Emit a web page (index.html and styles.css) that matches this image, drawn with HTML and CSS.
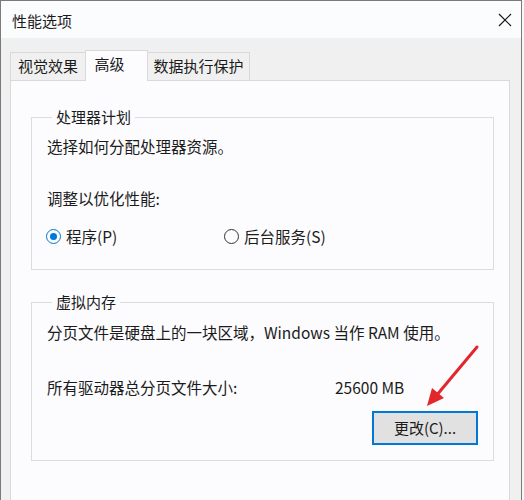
FILE: index.html
```html
<!DOCTYPE html>
<html lang="zh-CN">
<head>
<meta charset="utf-8">
<title>性能选项</title>
<link rel="stylesheet" href="styles.css">
</head>
<body>
<div class="window">
  <div class="titlebar">
    <span class="title">性能选项</span>
    <span class="close">
      <svg width="14" height="14" viewBox="0 0 14 14"><path d="M1 1 L13 13 M13 1 L1 13" stroke="#1a1a1a" stroke-width="1.2" fill="none"/></svg>
    </span>
  </div>
  <div class="body">
    <div class="tabs">
      <div class="tab tab-a">视觉效果</div>
      <div class="tab tab-b active">高级</div>
      <div class="tab tab-c">数据执行保护</div>
    </div>
    <div class="panel">
      <fieldset class="group group-cpu">
        <legend>处理器计划</legend>
        <p class="line l1">选择如何分配处理器资源。</p>
        <p class="line l2">调整以优化性能:</p>
        <div class="radios">
          <label class="radio r1"><span class="dot checked"></span>程序(P)</label>
          <label class="radio r2"><span class="dot"></span>后台服务(S)</label>
        </div>
      </fieldset>
      <fieldset class="group group-mem">
        <legend>虚拟内存</legend>
        <p class="line l3">分页文件是硬盘上的一块区域，Windows 当作 RAM 使用。</p>
        <div class="sizerow">
          <span class="sizelabel">所有驱动器总分页文件大小:</span>
          <span class="sizevalue">25600 MB</span>
        </div>
        <div class="btnrow">
          <button class="btn">更改(C)...</button>
        </div>
      </fieldset>
    </div>
    <svg class="arrow" width="524" height="500" viewBox="0 0 524 500">
      <line x1="477" y1="347" x2="436" y2="396" stroke="#e3262b" stroke-width="3" stroke-linecap="round"/>
      <polygon points="427,406 432,388 444,398" fill="#e3262b"/>
    </svg>
  </div>
</div>
</body>
</html>
```
FILE: styles.css
```css
html, body {
  margin: 0;
  padding: 0;
  background: #f7f7f9;
  height: 500px;
  overflow: hidden;
}
body {
  font-family: "Noto Sans CJK SC", "Noto Sans", sans-serif;
  font-size: 15px;
  color: #1b1b1b;
}
.window {
  width: 520px;
  height: 520px;
  border: 1px solid #7a7a7a;
  border-bottom: none;
  background: #f0f0f0;
}
.titlebar {
  height: 37px;
  background: #fbfcfe;
  display: flex;
  align-items: center;
  justify-content: space-between;
}
.title {
  padding-left: 11px;
  margin-top: 2px;
  font-size: 15px;
  line-height: 20px;
}
.close {
  width: 14px;
  height: 14px;
  margin-right: 9px;
  display: flex;
}
.body {
  position: relative;
  padding-top: 12px;
}
.tabs {
  display: flex;
  align-items: flex-end;
  margin-left: 9px;
  height: 30px;
  position: relative;
  z-index: 1;
}
.tab {
  box-sizing: border-box;
  height: 28px;
  border: 1px solid #d9d9d9;
  border-bottom: none;
  background: #f0f0f0;
  line-height: 26px;
  font-size: 15px;
  text-align: center;
}
.tab-a { width: 75px; border-right: none; }
.tab-b { width: 63px; }
.tab-c { width: 102px; border-left: none; }
.tab.active {
  height: 31px;
  background: #fcfcfe;
  margin-bottom: -1px;
  line-height: 26px;
  padding-right: 14px;
}
.panel {
  box-sizing: border-box;
  margin-left: 9px;
  width: 500px;
  height: 440px;
  border: 1px solid #d9d9d9;
  background: #fcfcfe;
  padding: 26px 17px 0 20px;
}
.group {
  margin: 0;
  padding: 0 0 0 15px;
  border: 1px solid #dcdcdc;
  min-width: 0;
  width: 463px;
  box-sizing: border-box;
}
legend {
  margin-left: 5px;
  padding: 0 4px;
  line-height: 20px;
  font-size: 15px;
}
.line {
  margin: 0;
  line-height: 20px;
  font-size: 15.5px;
  white-space: nowrap;
}
.l1 { margin-top: 9px; }
.l2 { margin-top: 32px; }
.radios {
  display: flex;
  margin-top: 18px;
  margin-bottom: 23px;
  line-height: 20px;
  font-size: 15.5px;
}
.radio {
  display: flex;
  align-items: center;
}
.r1 { width: 178px; margin-left: -1px; }
.dot {
  box-sizing: border-box;
  width: 15px;
  height: 15px;
  border: 1px solid #333;
  border-radius: 50%;
  margin-right: 5px;
  display: flex;
  align-items: center;
  justify-content: center;
}
.dot.checked {
  border-color: #0078d7;
}
.dot.checked::after {
  content: "";
  width: 7px;
  height: 7px;
  border-radius: 50%;
  background: #0078d7;
}
.group-mem { margin-top: 22px; }
.l3 { margin-top: 10px; }
.sizerow {
  display: flex;
  margin-top: 35px;
  line-height: 20px;
  font-size: 15.5px;
}
.sizelabel { width: 288px; }
.btnrow {
  display: flex;
  justify-content: flex-end;
  margin-top: 14px;
  padding-right: 15px;
  padding-bottom: 15px;
}
.btn {
  box-sizing: border-box;
  width: 106px;
  height: 34px;
  border: 2px solid #0078d7;
  background: #e1e1e1;
  font-family: "Noto Sans CJK SC", "Noto Sans", sans-serif;
  font-size: 15px;
  color: #1b1b1b;
  padding: 0;
  line-height: 28px;
}
.arrow {
  position: absolute;
  left: -1px;
  top: -38px;
  pointer-events: none;
}
```
